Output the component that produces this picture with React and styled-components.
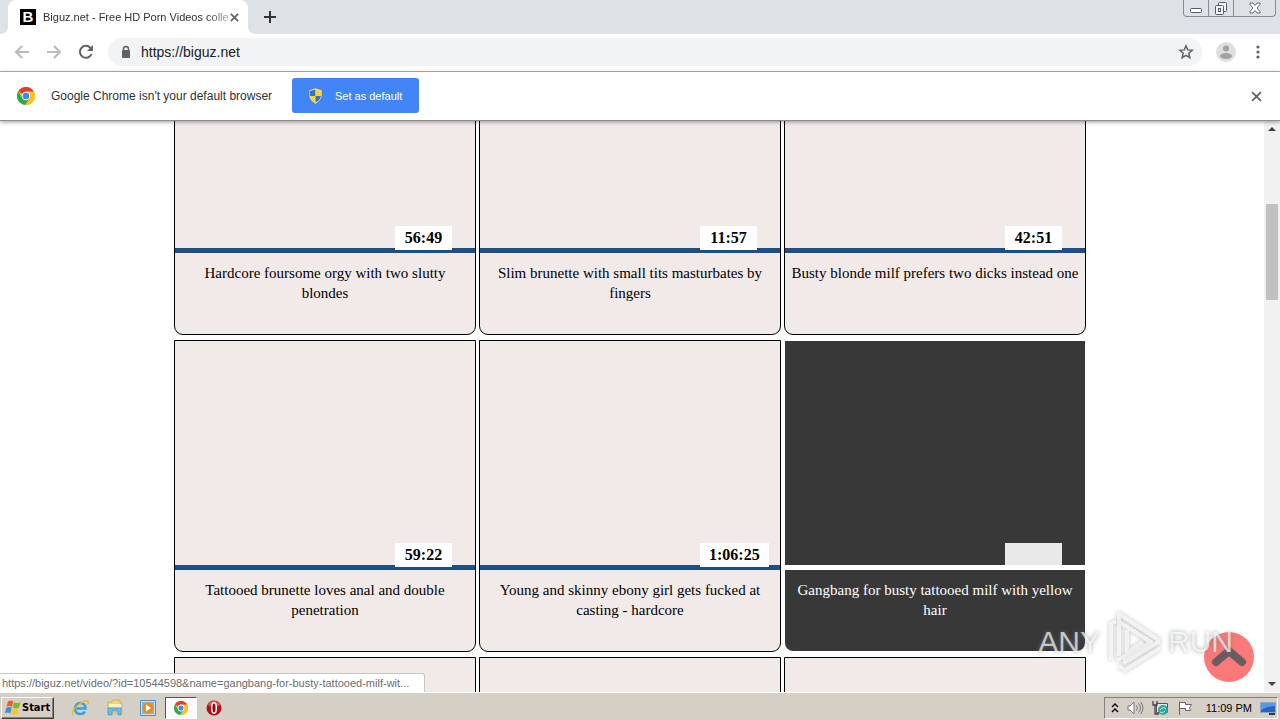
import React from "react";
import styled, { createGlobalStyle } from "styled-components";

const GlobalStyle = createGlobalStyle`
  *, *::before, *::after { box-sizing: border-box; }
  body { margin: 0; background: #fff; }
  button { font: inherit; color: inherit; border: 0; padding: 0; background: none; }
  svg { display: block; flex: none; }
`;

const Screen = styled.div`
  display: flex;
  flex-direction: column;
  height: 100vh;
  overflow: hidden;
  font-family: Tahoma, "Liberation Sans", sans-serif;
  font-size: 12px;
  color: #303236;
`;

const TabStrip = styled.header`
  display: flex;
  align-items: stretch;
  height: 34px;
  flex: none;
  padding-left: 8px;
  background: #dee1e6;
`;

const Tab = styled.div`
  position: relative;
  display: flex;
  align-items: center;
  width: 240px;
  padding: 0 10px 0 12px;
  border-radius: 8px 8px 0 0;
  background: #fff;
  &::before, &::after {
    content: "";
    position: absolute;
    bottom: 0;
    width: 8px;
    height: 8px;
  }
  &::before { left: -8px; background: radial-gradient(circle at 0 0, transparent 8px, #fff 8px); }
  &::after { right: -8px; background: radial-gradient(circle at 100% 0, transparent 8px, #fff 8px); }
`;

const Favicon = styled.span`
  width: 16px;
  height: 16px;
  flex: none;
  margin-right: 7px;
  background: #000;
  color: #fff;
  font: bold 15px/16px "Liberation Sans", sans-serif;
  text-align: center;
`;

const TabTitle = styled.span`
  flex: 1;
  white-space: nowrap;
  font-size: 11px;
  line-height: 16px;
  mask-image: linear-gradient(90deg, #000 88%, #0005);
`;

const IconButton = styled.button`
  display: grid;
  place-items: center;
  width: ${(p) => p.$size || 16}px;
  height: ${(p) => p.$size || 16}px;
  flex: none;
  color: ${(p) => p.$color || "#5f6368"};
`;

const NewTab = styled.div`
  display: flex;
  align-items: center;
  flex: 1;
  padding-left: 14px;
`;

const WindowControls = styled.div`
  display: flex;
  height: 17px;
  margin-right: 4px;
  border: 1px solid #868b98;
  border-top: 0;
  border-radius: 0 0 4px 4px;
`;

const WindowButton = styled.button`
  display: grid;
  place-items: center;
  width: ${(p) => p.$width}px;
  & + & { border-left: 1px solid #868b98; }
`;

const Toolbar = styled.nav`
  display: flex;
  align-items: center;
  height: 38px;
  flex: none;
  padding: 0 14px 2px;
  gap: 14px;
  border-bottom: 1px solid #b3b6ba;
  background: #fff;
`;

const NavButtons = styled.div`
  display: flex;
  gap: 16px;
`;

const Address = styled.div`
  display: flex;
  align-items: center;
  flex: 1;
  height: 28px;
  padding: 0 8px 0 12px;
  gap: 9px;
  border-radius: 14px;
  background: #f1f3f4;
`;

const UrlInput = styled.input`
  flex: 1;
  min-width: 0;
  padding: 0;
  border: 0;
  outline: 0;
  background: none;
  font: inherit;
  font-size: 14px;
  line-height: 20px;
  color: #202124;
`;

const InfoBar = styled.section`
  display: flex;
  align-items: center;
  height: 49px;
  flex: none;
  padding: 0 16px 0 17px;
  border-bottom: 1px solid #8f8f8f;
  background: #fff;
  box-shadow: 0 1px 4px #0006;
  z-index: 1;
`;

const InfoText = styled.span`
  min-width: 229px;
  margin: 0 12px 0 16px;
  font-size: 12px;
  white-space: nowrap;
`;

const DefaultButton = styled.button`
  display: flex;
  align-items: center;
  gap: 12px;
  min-width: 127px;
  height: 35px;
  margin: 0 auto 1px 0;
  padding: 0 16px;
  border-radius: 3px;
  background: #4285f4;
  color: #fff;
  font-size: 11px;
`;

const Viewport = styled.div`
  position: relative;
  display: flex;
  flex: 1;
  min-height: 0;
`;

const Page = styled.main`
  flex: 1;
  overflow: hidden;
  padding-right: 4px;
  background: #fff;
`;

const Grid = styled.div`
  display: grid;
  grid-template-columns: repeat(auto-fill, 302px);
  justify-content: center;
  gap: 5px 3px;
  max-width: 912px;
  margin: -98px auto 0;
`;

const Card = styled.a`
  display: block;
  height: 312px;
  border: 1px solid ${(p) => (p.$active ? "#fff" : "#000")};
  border-radius: 0 0 9px 9px;
  overflow: hidden;
  background: ${(p) => (p.$active ? "#383838" : "#f2eae9")};
  color: ${(p) => (p.$active ? "#fff" : "#000")};
  font: 15px/20px "Liberation Serif", serif;
  text-align: center;
  text-decoration: none;
`;

const Thumb = styled.div`
  position: relative;
  height: 229px;
  border-bottom: 5px solid ${(p) => (p.$active ? "#fff" : "#1f4e82")};
`;

const Duration = styled.span`
  position: absolute;
  left: 220px;
  bottom: ${(p) => (p.$active ? 0 : -2)}px;
  min-width: 57px;
  height: ${(p) => (p.$active ? 22 : 24)}px;
  padding: 0 9px;
  background: ${(p) => (p.$active ? "#e9e9e9" : "#fff")};
  font-size: 16px;
  font-weight: bold;
  line-height: 24px;
`;

const Title = styled.div`
  padding: 10px 5px 0;
`;

const Scrollbar = styled.aside`
  display: flex;
  flex-direction: column;
  align-items: center;
  width: 16px;
  background: #f1f1f1;
`;

const ScrollThumb = styled.div`
  width: 12px;
  height: 96px;
  margin: 67px 0 auto;
  background: #c1c1c1;
`;

const StatusBubble = styled.div`
  position: absolute;
  left: 0;
  bottom: 0;
  min-width: 425px;
  height: 19px;
  padding: 0 5px 0 2px;
  border: 1px solid #c6c6c6;
  border-width: 1px 1px 0 0;
  border-radius: 0 3px 0 0;
  background: #fff;
  color: #6b6d70;
  font-size: 11px;
  line-height: 18px;
  white-space: nowrap;
`;

const ScrollTop = styled.button`
  position: absolute;
  right: 26px;
  bottom: 10px;
  width: 50px;
  height: 50px;
  border-radius: 50%;
  background: #fb7979;
`;

const Watermark = styled.div`
  position: absolute;
  right: 47px;
  bottom: 18px;
  display: flex;
  align-items: center;
  gap: 5px;
  color: #ffffffb0;
  font: 30px/64px "Liberation Sans", sans-serif;
  text-shadow: 0 0 4px #777a;
  pointer-events: none;
`;

const PlayMark = styled.svg`
  filter: drop-shadow(0 0 2px #777a);
`;

const Taskbar = styled.footer`
  display: flex;
  align-items: center;
  height: 28px;
  flex: none;
  padding: 2px 2px 0 1px;
  border-top: 1px solid #fff;
  background: #d5cfc6;
  color: #000;
`;

const StartButton = styled.button`
  display: flex;
  align-items: center;
  gap: 1px;
  width: 53px;
  height: 22px;
  padding-left: 2px;
  border: 1px solid;
  border-color: #fff #404040 #404040 #fff;
  box-shadow: inset -1px -1px #85817a;
  font: bold 11px "DejaVu Sans Condensed", "DejaVu Sans", sans-serif;
`;

const Launchers = styled.div`
  display: flex;
  align-items: center;
  margin-left: 9px;
  flex: 1;
`;

const Launcher = styled.button`
  display: grid;
  place-items: center;
  width: ${(p) => (p.$open ? 32 : 34)}px;
  height: 22px;
  border: 1px solid transparent;
  ${(p) => p.$open && "border-color: #555 #fff #fff #555; background: #fbfafa;"}
`;

const Tray = styled.div`
  display: flex;
  align-items: center;
  gap: 8px;
  height: 22px;
  padding: 0 1px 0 6px;
  border: 1px solid;
  border-color: #85817a #fff #fff #85817a;
  font-size: 11px;
`;

const Clock = styled.time`
  margin-left: 5px;
`;

const Chrome = ({ size = 17 }) => (
  <svg width={size} height={size} viewBox="0 0 24 24" aria-hidden="true">
    <circle cx="12" cy="12" r="12" fill="#fbc116" />
    <path d="M12 12 1.6 6A12 12 0 0 1 22.4 6z" fill="#e33b2e" />
    <path d="M1.6 6A12 12 0 0 0 11 24L17 15 12 12 7 14z" fill="#2da94f" />
    <path d="M12 6h10.4a12 12 0 0 1-11.4 18l6-9z" fill="#fbc116" />
    <circle cx="12" cy="12" r="5.8" fill="#fff" />
    <circle cx="12" cy="12" r="4.4" fill="#4285f4" />
  </svg>
);

const Cross = ({ size = 9, width = 2 }) => (
  <svg width={size} height={size} viewBox="0 0 10 10" stroke="currentColor" strokeWidth={width} fill="none">
    <path d="m1 1 8 8M9 1 1 9" />
  </svg>
);

const Arrow = ({ left }) => (
  <svg width="16" height="16" viewBox="0 0 16 16" stroke="currentColor" strokeWidth="2" fill="none">
    <path d={left ? "M15 8H2M8 2 2 8l6 6" : "M1 8h13M8 2l6 6-6 6"} />
  </svg>
);

const Shield = () => (
  <svg width="15" height="16" viewBox="0 0 15 16">
    <path d="M7.500 0 14 2v5c0 4-3 7-6.500 9C4 14 1 11 1 7V2z" fill="#e8e4cf" stroke="#69735f" strokeWidth=".6" />
    <path d="M7.500 1.500V8H2V3z" fill="#3873c8" />
    <path d="M7.500 1.500 13 3v5H7.500z" fill="#f9d53c" />
    <path d="M2 8h5.500v6.500C4.500 13 2.400 10.500 2 8z" fill="#f9d53c" />
    <path d="M7.500 8H13c-.4 2.500-2.500 5-5.500 6.500z" fill="#3873c8" />
  </svg>
);

const WinFlag = () => (
  <svg width="17" height="16" viewBox="0 0 17 16">
    <path d="M4 1.500c2-1.200 4-1.200 5.300 0L8 7C6 5.800 4 5.800 2.500 7z" fill="#e9602b" />
    <path d="M10 2.200c2 1.200 4 1.200 6.500 0L15 7.500c-2 1.200-4.500 1.200-6.200 0z" fill="#7db928" />
    <path d="M2.200 8c2-1.200 4-1.200 5.500 0l-1.400 5.500c-2-1.200-4-1.200-5.500 0z" fill="#3c8fd8" />
    <path d="M8.500 8.600c2 1.200 4 1.200 6.200 0L13.300 14c-2 1.200-4.500 1.200-6.200 0z" fill="#f9c722" />
  </svg>
);

const Explorer = () => (
  <svg width="18" height="18" viewBox="0 0 18 18" fill="none">
    <path d="M4 9.500h10.500C14.500 6 12 4 9.300 4 6.300 4 4 6.500 4 9.700c0 3 2.300 5.300 5.400 5.300 2.100 0 3.800-1 4.600-2.500" stroke="#3da0dd" strokeWidth="2.600" />
    <path d="M2 16C-1 12 10 2 16 2c2 0 1.500 2 .5 4" stroke="#e8b92e" strokeWidth="1.300" />
  </svg>
);

const Folder = () => (
  <svg width="17" height="17" viewBox="0 0 17 17">
    <path d="M2 3h4l1-2h7v3h2v10H2z" fill="#f1d674" stroke="#c9a850" strokeWidth=".7" />
    <path d="M3 5h12v3H3z" fill="#fcf1b6" />
    <path d="M2 9h13v7h-3v-4H6v4H2z" fill="#69bde6" stroke="#3c8fbb" strokeWidth=".6" />
  </svg>
);

const Player = () => (
  <svg width="16" height="16" viewBox="0 0 16 16">
    <path d="M.5.500h15v15H.500z" fill="#c6e1f3" stroke="#4a91c8" />
    <path d="M2 2h12v12H2z" fill="#7cb8df" />
    <circle cx="8" cy="8" r="5.700" fill="#f28a1c" />
    <path d="m6 4.500 5 3.500-5 3.500z" fill="#fff" />
  </svg>
);

const Opera = () => (
  <svg width="16" height="16" viewBox="0 0 16 16">
    <circle cx="8" cy="8" r="7.500" fill="#b41218" />
    <path d="M2 5a6.500 6.500 0 0 1 12 0c-3 2-9 2-12 0z" fill="#dc5c57" />
    <ellipse cx="8" cy="8" rx="2.300" ry="5.200" fill="#8e090e" stroke="#fff" strokeWidth="1.500" />
  </svg>
);

const ScrollArrow = ({ down }) => (
  <svg width="16" height="16" viewBox="0 0 16 16">
    <path d={down ? "M4 6h8l-4 4z" : "M4 10h8L8 6z"} fill="#404040" />
  </svg>
);

const videos = [
  { title: "Hardcore foursome orgy with two slutty blondes", time: "56:49" },
  { title: "Slim brunette with small tits masturbates by fingers", time: "11:57" },
  { title: "Busty blonde milf prefers two dicks instead one", time: "42:51" },
  { title: "Tattooed brunette loves anal and double penetration", time: "59:22" },
  { title: "Young and skinny ebony girl gets fucked at casting - hardcore", time: "1:06:25" },
  { title: "Gangbang for busty tattooed milf with yellow hair", active: true },
  {}, {}, {},
];

export default function App() {
  return (
    <Screen>
      <GlobalStyle />
      <TabStrip>
        <Tab>
          <Favicon>B</Favicon>
          <TabTitle>Biguz.net - Free HD Porn Videos colle</TabTitle>
          <IconButton $size={12} aria-label="Close tab"><Cross /></IconButton>
        </Tab>
        <NewTab>
          <IconButton aria-label="New tab" $color="#303236">
            <svg width="12" height="12" stroke="currentColor" strokeWidth="2"><path d="M6 0v12M0 6h12" /></svg>
          </IconButton>
        </NewTab>
        <WindowControls>
          <WindowButton $width={24} aria-label="Minimize">
            <svg width="12" height="16" fill="#fff" stroke="#555b68"><rect x=".5" y="8.500" width="11" height="4" rx="1" /></svg>
          </WindowButton>
          <WindowButton $width={25} aria-label="Restore">
            <svg width="14" height="15" fill="#f4f5f7" stroke="#555b68">
              <rect x="4.500" y="1.500" width="8" height="9" rx="1" />
              <rect x="1.500" y="4.500" width="8" height="9" rx="1" />
              <rect x="4.500" y="7.500" width="2" height="3" />
            </svg>
          </WindowButton>
          <WindowButton $width={42} aria-label="Close">
            <svg width="12" height="12" viewBox="0 0 12 12" fill="#fff" stroke="#555b68" strokeWidth=".9">
              <path d="M1 1h3l2 2.500L8 1h3v1.500L8 6l3 3.500V11H8L6 8.500 4 11H1V9.500L4 6 1 2.500z" />
            </svg>
          </WindowButton>
        </WindowControls>
      </TabStrip>
      <Toolbar>
        <NavButtons>
          <IconButton aria-label="Back" $color="#b9bbbe"><Arrow left /></IconButton>
          <IconButton aria-label="Forward" $color="#b9bbbe"><Arrow /></IconButton>
          <IconButton aria-label="Reload">
            <svg width="16" height="16" viewBox="0 0 16 16" fill="none" stroke="currentColor" strokeWidth="2">
              <path d="M13.500 10A6 6 0 1 1 12.300 3.700L14 5.400" />
              <path d="M15 1v6H9z" fill="currentColor" stroke="none" />
            </svg>
          </IconButton>
        </NavButtons>
        <Address>
          <svg width="12" height="14" viewBox="0 0 12 14" fill="none" stroke="#5f6368">
            <path d="M3.500 6V4a2.500 2.500 0 0 1 5 0v2" strokeWidth="1.500" />
            <rect x="2" y="5" width="8" height="8" rx="1" fill="#5f6368" stroke="none" />
          </svg>
          <UrlInput aria-label="Address" defaultValue="https://biguz.net" />
          <IconButton aria-label="Bookmark">
            <svg width="16" height="16" viewBox="0 0 16 16" fill="none" stroke="currentColor" strokeWidth="1.500">
              <path d="m8 1.800 1.700 4.100 4.500.4-3.400 2.900 1 4.400L8 11.300l-3.800 2.300 1-4.400-3.400-2.900 4.500-.4z" />
            </svg>
          </IconButton>
        </Address>
        <IconButton $size={20} aria-label="Profile">
          <svg width="20" height="20"><circle cx="10" cy="10" r="10" fill="#dfdfdf" /><circle cx="10" cy="6.500" r="3" fill="#a2a2a2" /><ellipse cx="10" cy="14" rx="6" ry="3" fill="#a2a2a2" /></svg>
        </IconButton>
        <IconButton aria-label="Menu">
          <svg width="4" height="14" fill="#5f6368"><circle cx="2" cy="2" r="1.600" /><circle cx="2" cy="7" r="1.600" /><circle cx="2" cy="12" r="1.600" /></svg>
        </IconButton>
      </Toolbar>
      <InfoBar>
        <Chrome size={18} />
        <InfoText>Google Chrome isn't your default browser</InfoText>
        <DefaultButton><Shield />Set as default</DefaultButton>
        <IconButton aria-label="Dismiss"><Cross size={11} width={1.6} /></IconButton>
      </InfoBar>
      <Viewport>
        <Page>
          <Grid>
            {videos.map((v, i) => (
              <Card key={i} href="#" $active={v.active} aria-label={v.title || "Video"}>
                <Thumb $active={v.active}>
                  {(v.time || v.active) && <Duration $active={v.active}>{v.time}</Duration>}
                </Thumb>
                <Title>{v.title}</Title>
              </Card>
            ))}
          </Grid>
        </Page>
        <Scrollbar aria-label="Scroll bar"><ScrollArrow /><ScrollThumb /><ScrollArrow down /></Scrollbar>
        <ScrollTop aria-label="Back to top">
          <svg width="50" height="50" fill="none" stroke="#6a5c60" strokeWidth="8" strokeLinecap="round" strokeLinejoin="round"><path d="m12 30 13-11 13 11" /></svg>
        </ScrollTop>
        <Watermark>
          <span>ANY</span>
          <PlayMark width="58" height="64" viewBox="0 0 58 64" fill="none" stroke="#ffffffb0" strokeWidth="4" strokeLinejoin="round">
            <path d="M6 50V14l5-3M14 46V4l41 27M14 4v8l32 20-24 15M22 20v23l16-11M12 50l8-4v6l35-21M14 56l6 4 35-22" />
          </PlayMark>
          <span>RUN</span>
        </Watermark>
        <StatusBubble>https://biguz.net/video/?id=10544598&amp;name=gangbang-for-busty-tattooed-milf-wit...</StatusBubble>
      </Viewport>
      <Taskbar>
        <StartButton><WinFlag />Start</StartButton>
        <Launchers>
          <Launcher aria-label="Internet Explorer"><Explorer /></Launcher>
          <Launcher aria-label="Files"><Folder /></Launcher>
          <Launcher aria-label="Media Player"><Player /></Launcher>
          <Launcher aria-label="Chrome" $open><Chrome size={14} /></Launcher>
          <Launcher aria-label="Opera"><Opera /></Launcher>
        </Launchers>
        <Tray>
          <svg width="8" height="10" viewBox="0 0 8 10" fill="none" stroke="#000" strokeWidth="1.400"><path d="m1 4 3-3 3 3M1 9l3-3 3 3" /></svg>
          <svg width="17" height="16" viewBox="0 0 17 16" fill="#fff" stroke="#77797c">
            <path d="M1 6h2l4-4v12l-4-4H1z" />
            <path d="M9.500 5.500q2 2.500 0 5M11.500 3.500q4 4.500 0 9M13.500 2q5 6 0 12" fill="none" />
          </svg>
          <svg width="17" height="16" viewBox="0 0 17 16">
            <path d="M4.500 3.500h11v9h-11z" fill="#dceaf2" stroke="#555" />
            <path d="M1 1v4h4V1M3 5v9h4" fill="none" stroke="#444" strokeWidth="1.300" />
            <circle cx="11" cy="10" r="5" fill="#2fa798" /><path d="M8 10q3-4 6-1M8 12q3 2 5-1" stroke="#b9eee2" fill="none" />
          </svg>
          <svg width="16" height="16" viewBox="0 0 16 16" fill="#fff" stroke="#66686b"><path d="M2.500 15V1.500M2.500 2.500h6v2h6l-2 3 1 3h-5v-2h-6" /></svg>
          <Clock>11:09 PM</Clock>
          <svg width="16" height="14" viewBox="0 0 16 14"><path d="M.5 1.500h15v10H.500z" fill="#2565c5" stroke="#86a7cf" /><path d="M1 2h14v3Q7 5 1 9z" fill="#5b98e5" /><path d="M9 12h6v2H9z" fill="#333" /></svg>
        </Tray>
      </Taskbar>
    </Screen>
  );
}
